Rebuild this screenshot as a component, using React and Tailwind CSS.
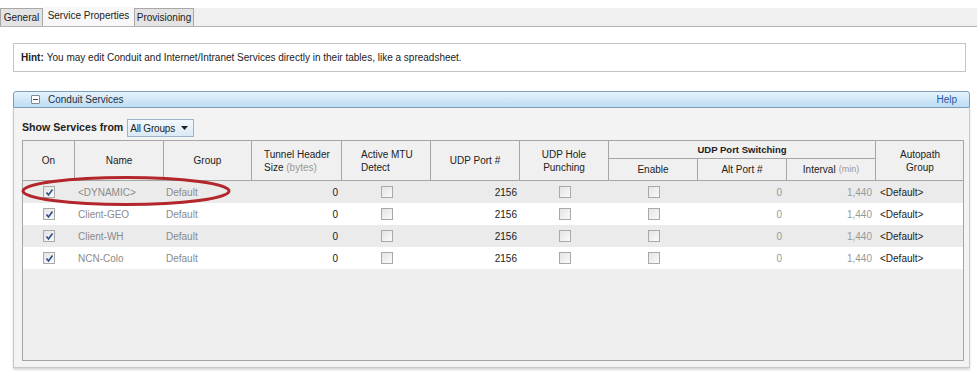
import React from 'react';

const rows = [
  { name: '<DYNAMIC>' },
  { name: 'Client-GEO' },
  { name: 'Client-WH' },
  { name: 'NCN-Colo' },
];

const cols = 'grid grid-cols-[52px_89px_88px_90px_89px_89px_89px_89px_89px_89px_88px]';

const Box = ({ checked }) => (
  <span className="inline-flex h-[12px] w-[12px] items-center justify-center border border-[#a9a9a9] bg-gradient-to-br from-[#e4e4e4] to-[#fafafa]">
    {checked && (
      <svg width="9" height="9" viewBox="0 0 9 9">
        <path d="M1.5 4.5 L3.5 7 L7.5 1.5" fill="none" stroke="#2a4d8f" strokeWidth="1.6" />
      </svg>
    )}
  </span>
);

const Th = ({ children, className = '' }) => (
  <div className={`flex items-center justify-center border-r border-b border-[#a5a5a5] text-center leading-[13px] ${className}`}>
    {children}
  </div>
);

export default function App() {
  return (
    <div className="relative h-[374px] w-[977px] overflow-hidden bg-white text-[10px] text-[#222]" style={{ fontFamily: '"Liberation Sans", Arial, sans-serif' }}>
      {/* tabs */}
      <div className="mt-[8px] flex h-[19px] items-end border-b border-[#b5b5b5] bg-[#f0f0f0]">
        <div className="flex h-[18px] w-[43px] items-center justify-center border border-b-0 border-[#a8a8a8] bg-[#e3e3e3]">General</div>
        <div className="flex h-[19px] w-[91px] items-start justify-center bg-[#f7f7f7] pt-[1px]">Service Properties</div>
        <div className="flex h-[18px] w-[60px] items-center justify-center border border-b-0 border-[#a8a8a8] bg-[#e3e3e3]">Provisioning</div>
      </div>

      {/* hint */}
      <div className="mx-[13px] mt-[16px] flex h-[29px] w-[953px] items-center border border-[#c4c4c4] px-[7px]">
        <span className="font-bold">Hint:</span>
        <span className="ml-[3px]">You may edit Conduit and Internet/Intranet Services directly in their tables, like a spreadsheet.</span>
      </div>

      {/* panel */}
      <div className="ml-[13px] mt-[19px] w-[957px]">
        <div className="flex h-[17px] items-center justify-between rounded-t-[3px] border border-[#7e9db8] bg-gradient-to-b from-[#e6f3fc] to-[#bcdcf3] pl-[17px] pr-[12px]">
          <div className="flex items-center">
            <span className="flex h-[9px] w-[9px] items-center justify-center rounded-[1px] border border-[#7a8a9a] bg-white">
              <span className="h-[1px] w-[5px] bg-[#444]" />
            </span>
            <span className="ml-[8px] text-[#1e2e3e]">Conduit Services</span>
          </div>
          <span className="text-[#2b56a8]">Help</span>
        </div>

        <div className="h-[260px] border-x border-b border-[#c8c8c8] bg-[#f3f3f3] pl-[8px] pr-[6px] pt-[11px] shadow-[0_2px_2px_#d8d8d8]">
          <div className="flex h-[18px] items-center">
            <span className="text-[10.6px] font-bold">Show Services from</span>
            <span className="ml-[4px] flex h-[18px] items-center border border-[#9fb3c7] bg-gradient-to-b from-[#f4f9fd] to-[#d9e9f6] pl-[2px] pr-[5px] tracking-[-0.2px]">
              All Groups
              <svg className="ml-[6px]" width="7" height="4" viewBox="0 0 7 4"><path d="M0 0 L7 0 L3.5 4 Z" fill="#222" /></svg>
            </span>
          </div>

          <div className="mt-[3px] h-[221px] w-[942px] border border-[#a5a5a5] bg-[#efefef]">
            {/* header */}
            <div className={`${cols} grid-rows-[18px_22px] bg-[#f0f0f0]`}>
              <Th className="row-span-2">On</Th>
              <Th className="row-span-2">Name</Th>
              <Th className="row-span-2">Group</Th>
              <Th className="row-span-2 !justify-start pl-[12px] text-left">
                <span>Tunnel Header<br />Size <span className="text-[#999]">(bytes)</span></span>
              </Th>
              <Th className="row-span-2 !justify-start pl-[19px] text-left">
                <span>Active MTU<br />Detect</span>
              </Th>
              <Th className="row-span-2">UDP Port #</Th>
              <Th className="row-span-2">
                <span>UDP Hole<br />Punching</span>
              </Th>
              <Th className="col-span-3 text-[9.5px] font-bold">UDP Port Switching</Th>
              <Th className="row-span-2 border-r-0">
                <span>Autopath<br />Group</span>
              </Th>
              <Th>Enable</Th>
              <Th>Alt Port #</Th>
              <Th>
                Interval <span className="ml-[3px] text-[9px] text-[#999]">(min)</span>
              </Th>
            </div>

            {rows.map((r, i) => (
              <div key={r.name} className={`${cols} h-[22px] items-center ${i % 2 === 0 ? 'bg-[#ebebeb]' : 'bg-white'}`}>
                <div className="flex justify-center"><Box checked /></div>
                <div className="pl-[3px] text-[#8a8a8a]">{r.name}</div>
                <div className="pl-[2px] text-[#8a8a8a]">Default</div>
                <div className="pr-[4px] text-right">0</div>
                <div className="flex justify-center"><Box /></div>
                <div className="pr-[3px] text-right">2156</div>
                <div className="flex justify-center"><Box /></div>
                <div className="flex justify-center"><Box /></div>
                <div className="pr-[5px] text-right text-[#999]">0</div>
                <div className="pr-[4px] text-right text-[#999]">1,440</div>
                <div className="pl-[4px]">&lt;Default&gt;</div>
              </div>
            ))}
          </div>
        </div>
      </div>

      {/* annotation */}
      <svg className="pointer-events-none absolute left-[20px] top-[175px]" width="214" height="34" viewBox="0 0 214 34">
        <ellipse cx="106" cy="16" rx="103" ry="13.5" fill="none" stroke="#b3262b" strokeWidth="3" />
      </svg>
    </div>
  );
}
